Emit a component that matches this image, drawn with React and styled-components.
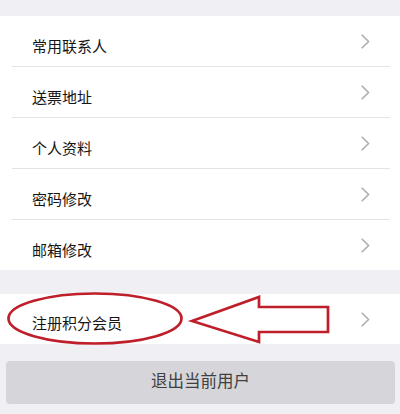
import React from "react";
import styled, { createGlobalStyle } from "styled-components";

const Global = createGlobalStyle`
  html, body { margin: 0; padding: 0; background: #efeff4; }
  body { font-family: "Noto Sans CJK SC", "Noto Sans", sans-serif; }
`;

const Page = styled.div`
  width: 400px;
  height: 414px;
  overflow: hidden;
  background: #efeff4;
  padding-top: 16px;
  box-sizing: border-box;
  display: flex;
  flex-direction: column;
`;

const Group = styled.div`
  background: #ffffff;
  display: flex;
  flex-direction: column;
  margin-bottom: ${(p) => p.$gap || 0}px;
`;

const Row = styled.div`
  position: relative;
  height: 50px;
  display: flex;
  align-items: center;
  justify-content: space-between;
  padding: 0 30px 0 32px;
`;

const Label = styled.span`
  font-size: 15px;
  color: #151515;
  padding-top: ${(p) => p.$shift || 0}px;
  line-height: 1;
`;

const Divider = styled.div`
  height: 1px;
  background: #e4e4e7;
  margin: 0 10px 0 12px;
`;

const Chevron = styled.svg`
  width: 9px;
  height: 15px;
  display: block;
`;

const Overlay = styled.svg`
  position: absolute;
  left: 0;
  top: 0;
  width: 400px;
  height: 50px;
  overflow: visible;
  pointer-events: none;
`;

const LogoutButton = styled.div`
  margin: 17px 5px 0 6px;
  height: 43px;
  border-radius: 4px;
  background: #d6d6da;
  display: flex;
  align-items: center;
  justify-content: center;
`;

const ButtonText = styled.span`
  font-size: 16.5px;
  color: #404040;
  line-height: 1;
  padding-bottom: 5px;
`;

const Arrow = () => (
  <Chevron viewBox="0 0 9 15">
    <path d="M1.2 1.2 L7.6 7.5 L1.2 13.8" fill="none" stroke="#adadb0" strokeWidth="1.6" strokeLinecap="round" strokeLinejoin="round" />
  </Chevron>
);

const items = ["常用联系人", "送票地址", "个人资料", "密码修改", "邮箱修改"];

export default function App() {
  return (
    <>
      <Global />
      <Page>
        <Group $gap={24}>
          {items.map((t, i) => (
            <React.Fragment key={t}>
              <Row>
                <Label $shift={8}>{t}</Label>
                <Arrow />
              </Row>
              {i < items.length - 1 && <Divider />}
            </React.Fragment>
          ))}
        </Group>
        <Group>
          <Row>
            <Label $shift={6}>注册积分会员</Label>
            <Arrow />
            <Overlay viewBox="0 0 400 50">
              <ellipse cx="95" cy="24.5" rx="86.5" ry="25" fill="none" stroke="#be1f2a" strokeWidth="2.7" />
              <polygon
                points="192,27 259,3 259,13 328,13 328,38 259,38 259,48"
                fill="none"
                stroke="#be1f2a"
                strokeWidth="2.7"
                strokeLinejoin="miter"
              />
            </Overlay>
          </Row>
        </Group>
        <LogoutButton>
          <ButtonText>退出当前用户</ButtonText>
        </LogoutButton>
      </Page>
    </>
  );
}
